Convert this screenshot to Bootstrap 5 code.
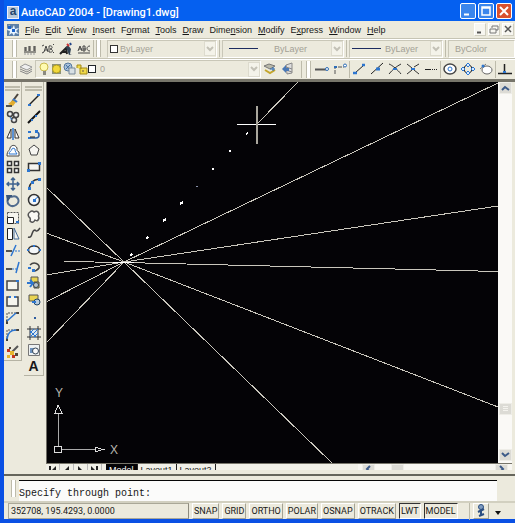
<!DOCTYPE html>
<html lang="en">
<head>
<meta charset="utf-8">
<meta name="viewport" content="width=device-width, initial-scale=1">
<title>AutoCAD 2004 - [Drawing1.dwg]</title>
<link href="https://cdn.jsdelivr.net/npm/bootstrap@5.3.0/dist/css/bootstrap.min.css" rel="stylesheet">
<style>
:root{--face:#eceadd;--edge:#aaa898;--ink:#15233f}
body{font:9px/12px "Liberation Sans",sans-serif;color:#181818;background:var(--face)}
button,select,input{font:inherit;color:inherit}
button{background:none;border:0;padding:0}
svg{display:block;flex:none}
.app-window{border-left:4px solid #0a50e4;border-bottom:4px solid #0a50e4}
.title-bar{height:21px;background:#0560f0;color:#fff;padding:0 3px 0 3px;gap:2px}
.title-bar h1{font:500 11px/16px Roboto,"Liberation Sans",sans-serif;padding-top:4px}
.app-logo{width:12px;height:13px;margin-top:3px;background:#b8c8d8;color:#24466e;border:1px solid #eef;font:bold 12px/9px "Liberation Sans",sans-serif;text-align:center}
.win-btn{width:16px;height:16px;border:1px solid #fff;border-radius:2px;background:#3b86ec}
.win-close{background:#d9512f}
.menu-row{height:17px;padding:0 1px 0 3px;gap:6px}
.menu-row a{color:inherit;text-decoration:none}
.menu-row .hot::first-letter{text-decoration:underline}
.menu-row .hot{display:block}
.mdi-gap{gap:2px}
.mdi-btn{width:12px;height:13px;background:#f7f6f0;border:1px solid #fff;border-right-color:#d0cec0;border-bottom-color:#d0cec0}
.tool-row{height:20px;border-top:1px solid #c6c4b4;box-shadow:inset 0 1px #fff}
.tool-row>*{flex-shrink:0}
.tool-row.lower{height:24px;border-bottom:3px solid #77756a}
.tight-end{margin-right:2px}
.tight{margin-left:2px;margin-right:2px}
.grip{width:5px;height:17px;border:solid #bdbbab;border-width:0 1px;background:#fff;flex:none}
.rule{width:1px;height:17px;background:#bdbbab;flex:none}
.combo{height:18px;border:1px solid #c9c7b8;border-right-color:#fff;border-bottom-color:#fff;color:#a3a196;padding-left:2px;overflow:hidden}
.combo select{appearance:none;border:0;background:none;color:#a3a196;opacity:1;padding:0;min-width:0;flex:1 1 0}
.combo-color{width:110px}.combo-type{width:122px}.combo-weight{width:94px}.combo-layer{width:226px}
.combo-style{width:66px}
.drop{width:12px;height:15px;background:#f4f3ea;border:1px solid #dddbce}
.swatch{width:8px;height:8px;border:1px solid #333;background:#fff;flex:none}
.stroke-demo{height:1px;background:#1c2c60;flex:none;width:29px}
.tool-row .clickable{width:14px;height:16px}
.palette{width:18px;border-right:1px solid #b5b3a4;border-bottom:1px solid #b5b3a4;align-self:flex-start;margin-right:2px}
.palette .tools{display:grid;grid-auto-rows:1fr;justify-items:center;align-items:center}
.palette-modify{height:279px}
.palette-draw{height:294px;width:20px}
.palette hr{margin:0 1px 1px;height:2px;border:1px solid #bdbbab;border-width:1px 0;background:#fff;opacity:1}
.letter-a{font:bold 14px/14px "Liberation Sans",sans-serif}
.view{background:#040306;border-left:1px solid #6e6c64}
.vbar{width:14px;background:#faf9f6;flex:none}
.vbar button,.hbar button{background:#dcdbd5;border:1px solid #eeede7;width:13px;height:12px}
.thumb{margin-bottom:34px}
.lower-btn{margin-bottom:2px}
.right-edge{width:3px}
.tabs{height:7px;background:#f1f0e8;border-top:1px solid #77756a;overflow:hidden;line-height:12px}
.tabs button{height:12px;flex:none}
.tabs .sheet{padding:0 3px;border-right:1px solid #222}
.tabs .on{background:#040306;color:#fff}
.tabs .nav-arrow{width:14px;border-right:1px solid #bbb}
.hbar{width:154px;background:#f8f7f2}
.command{border-top:2px solid #66665c;height:27px;padding:4px 18px 0 4px;margin-top:4px}
.command .grip{margin:0 3px}
.command input{border:0;border-top:1px solid #050505;border-radius:0;background:#fbfbfa;font:10px/12px "Liberation Mono",monospace;padding:5px 0 0;outline:0;min-width:0;color:#161616}
.status{height:18px;border-top:2px solid #d2d0c0;gap:3px;padding:0 3px 0 4px;font-family:Roboto,"Liberation Sans",sans-serif}
.status output{width:181px;border:1px solid #aaa898;border-right-color:#8d8b7e;line-height:14px;padding-left:2px;white-space:nowrap;flex:none}
.status button{border:1px solid #fff;border-right-color:#a5a394;border-bottom-color:#a5a394;line-height:13px;padding:0 1px;height:16px}
.status .down{border-color:#333 #fff #fff #333}
.status .tip{margin-right:8px}
</style>
</head>
<body class="overflow-hidden">
<svg class="d-none" aria-hidden="true">
<symbol id="chev" viewBox="0 0 8 6"><path d="M1 1l3 3 3-3" fill="none" stroke="#c3c1b6" stroke-width="2"/></symbol>
</svg>
<div class="app-window d-flex flex-column vh-100">
<header class="title-bar d-flex align-items-center">
<span class="app-logo">a</span>
<h1 class="m-0 flex-grow-1 text-nowrap">AutoCAD 2004 - [Drawing1.dwg]</h1>
<button class="win-btn" aria-label="Minimize"><svg width="14" height="14"><path d="M3 10.500h5" stroke="#fff" stroke-width="2"/></svg></button>
<button class="win-btn" aria-label="Maximize"><svg width="14" height="14"><path d="M3 5V3h8v8H3V4h8" fill="none" stroke="#fff" stroke-width="1.500"/></svg></button>
<button class="win-btn win-close" aria-label="Close"><svg width="14" height="14"><path d="M3 3l8 8M11 3l-8 8" stroke="#fff" stroke-width="2"/></svg></button>
</header>

<nav class="menu-row d-flex align-items-center" aria-label="Main menu">
<svg width="12" height="12"><path d="M0 0h12v12H0z" fill="#5c7fa6"/><path d="M2 1l3 4 2-4 1 4 4-1-3 3 3 3-4-1-1 3-2-3-3 2 1-4-3-1z" fill="#e8f4ff"/><path d="M1 2h3v3H1zM5 5h3v3H5z" fill="#1b62c8"/></svg>
<a class="hot" href="#">File</a><a class="hot" href="#">Edit</a><a class="hot" href="#">View</a><a class="hot" href="#">Insert</a><a href="#">F<u>o</u>rmat</a><a class="hot" href="#">Tools</a><a class="hot" href="#">Draw</a><a href="#">Dime<u>n</u>sion</a><a class="hot" href="#">Modify</a><a href="#">E<u>x</u>press</a><a class="hot" href="#">Window</a><a class="hot" href="#">Help</a>
<span class="d-flex ms-auto mdi-gap">
<button class="mdi-btn" aria-label="Minimize drawing"><svg width="10" height="11"><path d="M2 8.500h4" stroke="#555" stroke-width="2"/></svg></button>
<button class="mdi-btn" aria-label="Restore drawing"><svg width="10" height="11"><path d="M3 4V2h6v4H7M1 5h6v4H1z" fill="none" stroke="#777"/></svg></button>
<button class="mdi-btn" aria-label="Close drawing"><svg width="10" height="11"><path d="M2 2l6 6M8 2L2 8" stroke="#555" stroke-width="1.500"/></svg></button>
</span>
</nav>

<div class="tool-row d-flex align-items-center">
<span class="grip ms-2 me-1"></span>
<span class="tight-end"></span>
<button class="clickable me-1" aria-label="Dimension text"><svg width="14" height="14"><path d="M1 10h12M2 9V5m1 0v4M6 9V4m1 0v5M11 9V4m1 0v5" stroke="#333"/><path d="M1 12h12" stroke="#999" stroke-dasharray="2 1"/></svg></button>
<button class="clickable me-1" aria-label="Text mask"><svg width="14" height="14"><path d="M1 4l2-1M1 11l2-1M3 10l2-6 2 6M4 8h3M8 4v6c5 1 4-3 1-3 3 0 3-4-1-3M12 3l1-1M12 10l1 1" stroke="#444" fill="none"/></svg></button>
<button class="clickable me-1" aria-label="Explode text"><svg width="14" height="14"><path d="M1 12l6-6 1 6M3 10h5" stroke="#222" stroke-width="2" fill="none"/><path d="M7 5l2-2 3 4-1 5h2l-3 1" fill="#345"/><path d="M8 2l2 2" stroke="#c33" stroke-width="2"/><path d="M11 1l1 2" stroke="#248" stroke-width="2"/></svg></button>
<button class="clickable tight-end" aria-label="Arc text"><svg width="14" height="14"><path d="M1 9l2-5 2 5M2 7h3M6 4v5h2V4H6m0 3h3M13 4c-4 0-4 5 0 5M1 11h12" stroke="#444" fill="none"/></svg></button>
<span class="rule tight-end"></span><span class="grip me-1"></span><span class="tight-end"></span>
<div class="combo combo-color d-flex align-items-center"><span class="swatch tight-end"></span><select disabled aria-label="Color"><option>ByLayer</option></select><span class="drop d-flex align-items-center justify-content-center"><svg width="8" height="6"><use href="#chev"/></svg></span></div>
<span class="rule tight"></span>
<div class="combo combo-type d-flex align-items-center"><span class="stroke-demo ms-1 me-3"></span><select disabled aria-label="Linetype"><option>ByLayer</option></select><span class="drop d-flex align-items-center justify-content-center"><svg width="8" height="6"><use href="#chev"/></svg></span></div>
<span class="rule tight"></span>
<div class="combo combo-weight d-flex align-items-center"><span class="stroke-demo me-1"></span><select disabled aria-label="Lineweight"><option>ByLayer</option></select><span class="drop d-flex align-items-center justify-content-center"><svg width="8" height="6"><use href="#chev"/></svg></span></div>
<span class="rule tight"></span>
<div class="combo combo-style d-flex align-items-center flex-grow-1"><select class="ms-1" disabled aria-label="Plot style"><option>ByColor</option></select></div>
</div>

<div class="tool-row lower d-flex align-items-center">
<span class="grip ms-2 tight-end"></span>
<button class="clickable tight-end" aria-label="Layer manager"><svg width="14" height="14"><path d="M1 5l5-3 7 3-5 3z" fill="#eee" stroke="#999"/><path d="M1 7l7 3 5-3M1 9l7 3 5-3" stroke="#888" fill="none"/></svg></button>
<div class="combo combo-layer d-flex align-items-center">
<svg width="12" height="14" viewBox="0 0 12 14"><circle cx="6" cy="5" r="4" fill="#fffbb0" stroke="#c9b94c"/><path d="M5 9h3v4H5z" fill="#8b8a80"/></svg>
<svg width="13" height="14" viewBox="0 0 13 14"><path d="M2 2h9v10H2z" fill="#8d9278"/><circle cx="6.500" cy="7" r="4" fill="#f2d93c" stroke="#b5a11e"/></svg>
<svg width="13" height="14" viewBox="0 0 13 14"><circle cx="5" cy="5" r="4" fill="#a9c2dc" stroke="#55789e"/><path d="M3 3l4 5M7 3L3 7" stroke="#446f9e"/><path d="M6 6h6v6H6z" fill="#d8e0e4" stroke="#788898"/></svg>
<svg width="12" height="14" viewBox="0 0 12 14"><path d="M1 6V3h4v4M4 6h7v6H4z" fill="#f0da4a" stroke="#a58c18"/><path d="M7 8v2" stroke="#654"/></svg>
<span class="swatch me-1 border-dark"></span>
<select disabled aria-label="Layer"><option>0</option></select><span class="drop d-flex align-items-center justify-content-center"><svg width="8" height="6"><use href="#chev"/></svg></span></div>
<button class="clickable tight" aria-label="Make layer current"><svg width="14" height="14"><path d="M1 4l5-2 6 2-5 3z" fill="#b9b9aa" stroke="#777"/><path d="M2 8l5 3 5-3" fill="none" stroke="#c4a62c" stroke-width="2"/><path d="M7 7h5M10 5v4" stroke="#2d6db7"/></svg></button>
<button class="clickable tight" aria-label="Layer previous"><svg width="14" height="14"><path d="M5 3l6-2v10l-5 1zM5 5l6 2M5 8l6 2" fill="#ddd" stroke="#888"/><path d="M1 7l4-4v3h3v3H5v2z" fill="#4a78b5"/></svg></button>
<span class="rule mx-1"></span><span class="grip me-1"></span>
<button class="clickable me-1" aria-label="Temporary track point"><svg width="14" height="14"><path d="M0 7.500h11" stroke="#555" stroke-width="2"/><circle cx="12" cy="7" r="1.500" fill="#fff" stroke="#2d6db7"/></svg></button>
<button class="clickable" aria-label="Snap from"><svg width="14" height="14"><path d="M2 12V5h9" stroke="#555" stroke-dasharray="4 1" fill="none"/><circle cx="12" cy="3.500" r="1.500" fill="#fff" stroke="#2d6db7"/><path d="M1 5h3" stroke="#2d6db7" stroke-width="2"/></svg></button>
<span class="rule tight"></span>
<button class="clickable me-1" aria-label="Endpoint snap"><svg width="14" height="14"><path d="M3 11l9-8" stroke="#222"/><path d="M1 11h4M10 3h3" stroke="#2d76d0" stroke-width="2.500"/></svg></button>
<button class="clickable me-1" aria-label="Midpoint snap"><svg width="14" height="14"><path d="M1 12L13 1" stroke="#222"/><path d="M6 7h4" stroke="#2d76d0" stroke-width="3"/></svg></button>
<button class="clickable me-1" aria-label="Intersection snap"><svg width="14" height="14"><path d="M1 2c3 1 9 6 12 10M1 12C4 8 9 4 13 2" stroke="#333" fill="none"/><path d="M5 7h4" stroke="#2d76d0" stroke-width="2"/></svg></button>
<button class="clickable me-1" aria-label="Apparent intersection"><svg width="14" height="14"><path d="M1 2l5 4m2 2l5 4M1 12l5-4m2-3l5-3" stroke="#333"/><path d="M5 7h4" stroke="#2d76d0" stroke-width="2"/></svg></button>
<button class="clickable" aria-label="Extension snap"><svg width="14" height="14"><path d="M1 7.500h6" stroke="#222"/><path d="M8 7.500h6" stroke="#222" stroke-dasharray="1 1"/></svg></button>
<span class="rule tight"></span>
<button class="clickable me-1" aria-label="Center snap"><svg width="14" height="14"><ellipse cx="7" cy="7" rx="6" ry="5" stroke="#444" stroke-width="1.500" fill="#fff"/><circle cx="7" cy="7" r="2" stroke="#2d76d0" fill="none"/></svg></button>
<button class="clickable me-1" aria-label="Quadrant snap"><svg width="14" height="14"><circle cx="7" cy="7" r="4" stroke="#333" fill="none"/><path d="M7 1l2 2-2 2-2-2zM7 9l2 2-2 2-2-2zM2 5l2 2-2 2-2-2zM12 5l2 2-2 2-2-2z" fill="#d6eaff" stroke="#2d76d0"/></svg></button>
<button class="clickable" aria-label="Tangent snap"><svg width="14" height="14"><ellipse cx="8" cy="8" rx="5" ry="4" stroke="#666" fill="#fff"/><path d="M1 7l6-5" stroke="#777"/><circle cx="4" cy="4" r="1.500" fill="#2d76d0"/></svg></button>
<span class="rule tight"></span>
<button class="clickable" aria-label="Perpendicular snap"><svg width="14" height="14"><path d="M0 11.500h14M6.500 2v9" stroke="#222" stroke-width="1.500"/><path d="M5 10h3" stroke="#2d76d0" stroke-width="2"/></svg></button>
</div>

<main class="d-flex flex-grow-1">
<div class="palette palette-modify d-flex flex-column pt-1" role="toolbar" aria-label="Modify"><hr><hr>
<div class="tools flex-grow-1">
<button aria-label="Erase"><svg width="14" height="14"><path d="M6 9l6-8" stroke="#4a443c" stroke-width="2"/><path d="M2 11l5-4 3 2-3 4z" fill="#e2ad2e"/><path d="M7 6l4 3" stroke="#3a78c8" stroke-width="2"/><path d="M0 13h6" stroke="#222" stroke-width="1.500"/></svg></button>
<button aria-label="Copy"><svg width="14" height="14"><g fill="#eee" stroke="#444" stroke-width="1.500"><circle cx="4" cy="4" r="2.500"/><circle cx="10" cy="5" r="2.500"/><circle cx="8" cy="10" r="2.500"/></g><path d="M4 7l2 3" stroke="#2d76d0"/></svg></button>
<button aria-label="Mirror"><svg width="14" height="14"><path d="M5 2v9H1zM9 2v9h4z" fill="#fff" stroke="#333"/><path d="M7 1v12" stroke="#2d76d0" stroke-width="1.500"/></svg></button>
<button aria-label="Offset"><svg width="14" height="14"><path d="M1 12h12V8c-2-1-2-1-2-4-2-4-6-3-7 0 0 3-3 2-3 8z" fill="#fff" stroke="#444"/><path d="M3 10h8c-1-2-2-2-2-5-1-1-3-1-3 0 0 2-3 2-3 5z" fill="none" stroke="#2d76d0"/></svg></button>
<button aria-label="Array"><svg width="14" height="14"><path d="M1.500 1.500h4v4h-4zM8.500 1.500h4v4h-4zM1.500 8.500h4v4h-4zM8.500 8.500h4v4h-4z" fill="#fff" stroke="#333" stroke-width="1.500"/></svg></button>
<button aria-label="Move"><svg width="14" height="14"><path d="M7 1v12M1 7h12M5 3l2-2 2 2M5 11l2 2 2-2M3 5L1 7l2 2M11 5l2 2-2 2" stroke="#3e628f" stroke-width="1.500" fill="none"/></svg></button>
<button aria-label="Rotate"><svg width="14" height="14"><path d="M5 3c7-3 10 5 5 8-5 3-10-1-8-6" stroke="#506b8e" stroke-width="2" fill="none"/><path d="M0 1h6v1L2 7H1z" fill="#38547a"/></svg></button>
<button aria-label="Scale"><svg width="14" height="14"><path d="M1.500 1.500h11v11h-11z" fill="#f5f4ee" stroke="#555" stroke-dasharray="2 1"/><path d="M1.500 6.500h6v6h-6z" fill="#fff" stroke="#222"/><path d="M10 11h3" stroke="#2d76d0" stroke-width="2"/></svg></button>
<button aria-label="Stretch"><svg width="14" height="14"><path d="M1.500 1.500h5v11h-5z" fill="#fff" stroke="#222"/><path d="M8 1l5 11H8z" stroke="#456b98" fill="#f4f4f0"/></svg></button>
<button aria-label="Trim"><svg width="14" height="14"><path d="M5 12l5-11" stroke="#2d76d0" stroke-width="1.500"/><path d="M0 7h6" stroke="#222" stroke-width="1.500"/><path d="M9 7h5" stroke="#2d76d0" stroke-dasharray="2 1"/></svg></button>
<button aria-label="Extend"><svg width="14" height="14"><path d="M10 12l3-11" stroke="#2d76d0" stroke-width="1.500"/><path d="M0 8h6" stroke="#222" stroke-width="1.500"/><path d="M6 8h5" stroke="#2d76d0" stroke-dasharray="2 1"/></svg></button>
<button aria-label="Break at point"><svg width="14" height="14"><path d="M1 3h11v9H1z" fill="#f6f5ee" stroke="#444" stroke-width="1.500"/><path d="M10 3h3" stroke="#2d76d0" stroke-width="2"/></svg></button>
<button aria-label="Break"><svg width="14" height="14"><path d="M4 3H1v9h11V3H9" fill="#f6f5ee" stroke="#444" stroke-width="1.500"/><path d="M3 3h2M8 3h2" stroke="#2d76d0" stroke-width="2"/></svg></button>
<button aria-label="Chamfer"><svg width="14" height="14"><path d="M1 13V2h12" stroke="#555" stroke-dasharray="2 1" fill="none"/><path d="M1 13V9M10 2h3" stroke="#222" stroke-width="1.500"/><path d="M1 10l9-8" stroke="#2d76d0" stroke-width="1.500"/></svg></button>
<button aria-label="Fillet"><svg width="14" height="14"><path d="M1 13V2h12" stroke="#555" stroke-dasharray="2 1" fill="none"/><path d="M1 13v-3M10 2h3" stroke="#222" stroke-width="1.500"/><path d="M1 11q1-9 9-9" stroke="#2d76d0" stroke-width="1.500" fill="none"/></svg></button>
<button aria-label="Explode"><svg width="14" height="14"><path d="M5 8l7-7" stroke="#555" stroke-width="2"/><path d="M1 4h3v3H1zM6 10h3v3H6z" fill="#c4351f"/><path d="M4 6h4v4H4zM1 10h3v3H1z" fill="#e6b52d"/><path d="M9 8h3v3H9zM3 2h2v2H3z" fill="#514638"/></svg></button>
</div></div>
<div class="palette palette-draw d-flex flex-column pt-1" role="toolbar" aria-label="Draw"><hr><hr>
<div class="tools flex-grow-1">
<button aria-label="Line"><svg width="14" height="14"><path d="M2 12L12 2" stroke="#222" stroke-width="1.500"/><path d="M1 11h3v2H1zM10 1h3v2h-3z" fill="#2d76d0"/></svg></button>
<button aria-label="Construction line"><svg width="14" height="14"><path d="M1 13L13 1" stroke="#111" stroke-width="2"/><path d="M4 9h2v2H4zM8 5h2v2H8z" fill="#2d76d0"/></svg></button>
<button aria-label="Polyline"><svg width="14" height="14"><path d="M2 11h7c4 0 4-6 0-6" stroke="#2a5ca0" stroke-width="1.500" fill="none"/><path d="M1 4h3v2H1zM1 10h3v2H1zM8 3h3v3H8z" fill="#2d76d0"/><path d="M3 10h5" stroke="#222"/></svg></button>
<button aria-label="Polygon"><svg width="14" height="14"><path d="M7 2l5 4-2 6H4L2 6z" fill="#f6f5f0" stroke="#444"/></svg></button>
<button aria-label="Rectangle"><svg width="14" height="14"><path d="M1.500 3.500h11v7h-11z" fill="#f6f5f0" stroke="#333" stroke-width="1.500"/><path d="M0 9h3v3H0zM11 2h3v3h-3z" fill="#2d76d0"/></svg></button>
<button aria-label="Arc"><svg width="14" height="14"><path d="M2 12Q3 3 12 2" stroke="#333" stroke-width="1.500" fill="none"/><path d="M1 10h3v3H1zM4 4h3v3H4zM11 1h3v3h-3z" fill="#2d76d0"/></svg></button>
<button aria-label="Circle"><svg width="14" height="14"><circle cx="7" cy="7" r="5.500" fill="#f5f7f8" stroke="#333" stroke-width="1.500"/><path d="M7 7l4-3" stroke="#2d76d0"/><path d="M6 6h3v3H6z" fill="#2d76d0"/></svg></button>
<button aria-label="Revision cloud"><svg width="14" height="14"><path d="M3 2q2-2 4 0 4-2 5 2-1 2 0 4-1 4-4 2-2 4-5 1 1-3-1-4-2-3 1-5z" fill="#f9f8f4" stroke="#555" stroke-width="1.500"/></svg></button>
<button aria-label="Spline"><svg width="14" height="14"><path d="M1 11c5 2 3-7 7-7 1 2 3 1 5-2" stroke="#444" stroke-width="1.500" fill="none"/></svg></button>
<button aria-label="Ellipse"><svg width="14" height="14"><ellipse cx="7" cy="7" rx="5.500" ry="4" fill="#f4f7f8" stroke="#333" stroke-width="1.500"/><path d="M0 6h2v2H0zM12 6h2v2h-2zM6 2h2v2H6z" fill="#2d76d0"/></svg></button>
<button aria-label="Ellipse arc"><svg width="14" height="14"><path d="M3 5c4-4 10-1 9 3-2 3-5 3-6 3" stroke="#444" fill="none" stroke-width="1.500"/><path d="M1 7h3v2H1zM5 9h3v3H5z" fill="#2d76d0"/></svg></button>
<button aria-label="Insert block"><svg width="14" height="14"><path d="M4 1h7v6H4z" fill="#e8d352" stroke="#555"/><path d="M7 6h5v6H7z" fill="#e8d352" stroke="#444"/><circle cx="9" cy="9" r="2.500" fill="#b9c5cd" stroke="#345"/><path d="M0 7h5M3 4l3 3-3 4" stroke="#2d76d0" stroke-width="2" fill="none"/></svg></button>
<button aria-label="Make block"><svg width="14" height="14"><path d="M2 2h9v6H2z" fill="#e8d352" stroke="#555"/><circle cx="10" cy="9" r="3" fill="#b9cddd" stroke="#246"/><path d="M5 9h4" stroke="#2d76d0" stroke-width="2"/></svg></button>
<button aria-label="Point"><svg width="14" height="14"><path d="M7 7h2v2H7z" fill="#2d5c9e"/></svg></button>
<button aria-label="Hatch"><svg width="14" height="14"><path d="M2 2h10v10H2z" fill="#d9e6f0"/><path d="M3 0v14M11 0v14M0 3h14M0 11h14" stroke="#333"/><path d="M3 7l4-4M3 11l8-8M7 11l4-4M3 5l6 6" stroke="#2d76d0"/></svg></button>
<button aria-label="Region"><svg width="14" height="14"><path d="M1.500 1.500h11v11h-11z" fill="#edf1f2" stroke="#777"/><path d="M3 5h4v5H3z" fill="#6b91bd"/><circle cx="8.500" cy="8" r="3" fill="#f8f8f8" stroke="#345"/></svg></button>
<button aria-label="Multiline text"><span class="letter-a">A</span></button>
</div></div>
<section class="d-flex flex-column flex-grow-1" aria-label="Drawing area">
<div class="d-flex flex-grow-1">
<svg class="view flex-fill" viewBox="47 82 451 381" preserveAspectRatio="xMinYMin slice" role="img" aria-label="Construction lines through one point">
<g stroke="#c9c6bc" fill="none" shape-rendering="crispEdges">
<path d="M46 187L124 262 332 463M46 233L124 262 498 407M64 261.500L124 262.500 498 271.500M46 275L124 262 498 206M46 302L124 262 498 83M46 343L124 262M257 124L298 82"/>
<path stroke="#fff" d="M113 262.500h21M237 124.500h39"/>
<path stroke="#aaa79d" stroke-width="2" d="M257 106v38"/>
<path stroke="#fff" stroke-width="2" d="M246 134l2-1M229 151h2M212 168.500h2M180 204l3-2M163 221l3-2M146 239l2-2M130 256l2-2"/>
<path stroke="#8890a8" d="M196 186.500h2"/>
<path stroke="#aaa" d="M58.500 446V413M62 449.500h33"/>
<path stroke="#ddd" d="M54.500 446.500h7v6h-7zM58 405l-3 8h7zM95 447v5l8-2.500z"/>
</g>
<g fill="#b8b6ae" font-family="Liberation Sans,sans-serif" font-size="12"><text x="55" y="397">Y</text><text x="110" y="454">X</text></g>
</svg>
<div class="vbar d-flex flex-column align-items-center" role="group" aria-label="Vertical scroll">
<button aria-label="Scroll up"><svg width="11" height="10"><path d="M2 7l3-3 4 3" fill="none" stroke="#3c5a88" stroke-width="2"/></svg></button>
<button class="thumb mt-auto" aria-label="Scroll position"><svg width="11" height="10"><path d="M3 2.500h5M3 4.500h5M3 6.500h5" stroke="#f4f3ee"/></svg></button>
<button class="lower-btn" aria-label="Scroll down"><svg width="11" height="10"><path d="M2 3l3 3 4-3" fill="none" stroke="#3c5a88" stroke-width="2"/></svg></button>
</div>
</div>
<div class="tabs d-flex align-items-start">
<button class="nav-arrow" aria-label="First"><svg width="13" height="12"><path d="M4 2v8" stroke="#222" stroke-width="2"/><path d="M10 2v8L6 6z" fill="#222"/></svg></button><button class="nav-arrow" aria-label="Previous"><svg width="13" height="12"><path d="M9 2v8L5 6z" fill="#222"/></svg></button><button class="nav-arrow" aria-label="Next"><svg width="13" height="12"><path d="M4 2v8l4-4z" fill="#222"/></svg></button><button class="nav-arrow" aria-label="Last"><svg width="13" height="12"><path d="M9 2v8" stroke="#222" stroke-width="2"/><path d="M3 2v8l4-4z" fill="#222"/></svg></button>
<button class="sheet on ms-1">Model</button><button class="sheet">Layout1</button><button class="sheet">Layout2</button>
<div class="hbar ms-auto d-flex align-items-start px-1"><button aria-label="Scroll left"><svg width="11" height="10"><path d="M7 1L4 4l3 3" fill="none" stroke="#3c5a88" stroke-width="2"/></svg></button><button class="me-auto ms-3" aria-label="Horizontal position"></button><button aria-label="Scroll right"><svg width="11" height="10"><path d="M4 1l3 3-3 3" fill="none" stroke="#3c5a88" stroke-width="2"/></svg></button></div>
</div>
</section>
<div class="right-edge"></div>
</main>

<div class="command d-flex align-items-stretch"><span class="grip"></span><input class="flex-grow-1" aria-label="Command line" value="Specify through point:"></div>
<footer class="status d-flex align-items-center">
<output>352708, 195.4293, 0.0000</output>
<button>SNAP</button><button>GRID</button><button>ORTHO</button><button>POLAR</button><button>OSNAP</button><button>OTRACK</button><button class="down">LWT</button><button class="down">MODEL</button>
<span class="rule ms-auto"></span>
<button aria-label="Communication center"><svg width="12" height="14"><circle cx="6" cy="3" r="2.500" fill="#7f9cc0" stroke="#2c4f82"/><path d="M3 8l6-3M4 12l5-2M6 6v6" stroke="#2c4f82" stroke-width="2"/></svg></button>
<button class="tip border-0" aria-label="Status bar menu"><svg width="10" height="14"><path d="M2 7h6l-3 4z" fill="#111"/></svg></button>
</footer>
</div>
<script src="https://cdn.jsdelivr.net/npm/bootstrap@5.3.0/dist/js/bootstrap.bundle.min.js"></script>
</body>
</html>
